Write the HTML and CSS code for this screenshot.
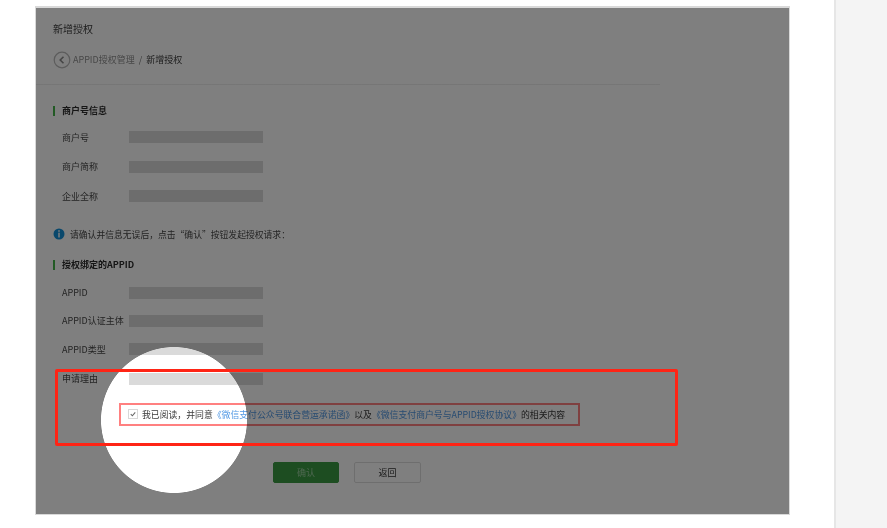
FILE: index.html
```html
<!DOCTYPE html>
<html lang="zh-CN">
<head>
<meta charset="utf-8">
<title>新增授权</title>
<link rel="stylesheet" href="styles.css">
</head>
<body>
<div class="page">
  <main class="main">
    <section class="shot">
      <div class="content">
        <h1 class="title">新增授权</h1>
        <div class="crumbs">
          <svg class="back" width="18" height="18" viewBox="0 0 18 18"><circle cx="9" cy="9" r="7.8" fill="none" stroke="#b8b8b8" stroke-width="1.2"/><path d="M10.5 5.8 7.2 9l3.3 3.2" fill="none" stroke="#8a8a8a" stroke-width="1.6"/></svg>
          <span class="crumb-link">APPID授权管理</span>
          <span class="crumb-sep">/</span>
          <span class="crumb-current">新增授权</span>
        </div>
        <hr class="divider">
        <h2 class="section first">商户号信息</h2>
        <div class="rows rows-a">
          <div class="row"><span class="label">商户号</span><span class="bar"></span></div>
          <div class="row"><span class="label">商户简称</span><span class="bar"></span></div>
          <div class="row"><span class="label">企业全称</span><span class="bar"></span></div>
        </div>
        <div class="notice">
          <svg width="12" height="12" viewBox="0 0 12 12"><circle cx="6" cy="6" r="5.5" fill="#1290d8"/><rect x="5.2" y="2.2" width="1.6" height="1.6" fill="#eaf6fc"/><rect x="5.2" y="4.7" width="1.6" height="4.8" fill="#eaf6fc"/></svg>
          <span>请确认并信息无误后，点击“确认”按钮发起授权请求：</span>
        </div>
        <h2 class="section second">授权绑定的APPID</h2>
        <div class="rows rows-b">
          <div class="row"><span class="label">APPID</span><span class="bar"></span></div>
          <div class="row"><span class="label">APPID认证主体</span><span class="bar"></span></div>
          <div class="row"><span class="label">APPID类型</span><span class="bar"></span></div>
          <div class="row reason"><span class="label">申请理由</span><span class="bar"></span></div>
        </div>
        <div class="agree">
          <span class="check"><svg width="10" height="10" viewBox="0 0 10 10"><path d="M2.2 5.2 4.2 7.2 7.8 3" fill="none" stroke="#666" stroke-width="1.3"/></svg></span>
          <span>我已阅读，并同意<a class="link">《微信支付公众号联合营运承诺函》</a>以及<a class="link">《微信支付商户号与APPID授权协议》</a>的相关内容</span>
        </div>
        <div class="actions">
          <button class="btn primary" type="button">确认</button>
          <button class="btn" type="button">返回</button>
        </div>
      </div>
      <div class="agree-frame"></div>
      <div class="dim"></div>
      <div class="highlight"></div>
    </section>
  </main>
  <aside class="side"></aside>
</div>
</body>
</html>
```
FILE: styles.css
```css
* { box-sizing: border-box; }
html, body { margin: 0; height: 100%; }
body {
  overflow: hidden;
  background: #fff;
  font-family: "Noto Sans CJK SC", "Liberation Sans", sans-serif;
  font-size: 9px;
  color: #333;
}
.page { display: flex; height: 528px; }
.main { width: 834px; padding: 6px 0 0 35px; }
.side { flex: 1; background: #f4f4f4; border-left: 2px solid #e6e6e6; }

.shot {
  position: relative;
  width: 755px;
  height: 509px;
  background: #fff;
  border: solid #d9d9d9;
  border-width: 2px 1px 1px 1px;
}
.content { height: 100%; padding-top: 14px; filter: blur(0.35px); }

.title { margin: 0 0 0 17px; font-size: 10px; line-height: 14px; font-weight: 400; color: #3c3c3c; }
.crumbs { display: flex; align-items: center; margin: 15px 0 0 17px; height: 18px; line-height: 18px; }
.back { margin-right: 2px; }
.crumb-link { color: #8f8f8f; }
.crumb-sep { margin: 0 4px; color: #777; }
.crumb-current { color: #3c3c3c; }
.divider { width: 624px; margin: 15px 0 0; border: 0; border-top: 1px solid #9e9e9e30; }

.section {
  margin: 0 0 0 17px;
  padding-left: 7px;
  border-left: 2px solid #44b549;
  font-size: 9px;
  line-height: 10px;
  font-weight: 700;
  color: #2c2c2c;
}
.section.first { margin-top: 21px; }
.section.second { margin-top: 20px; }

.rows { display: flex; flex-direction: column; margin-left: 26px; }
.rows-a { gap: 17.5px; margin-top: 15px; }
.rows-b { gap: 16.4px; margin-top: 16.6px; }
.row { display: flex; align-items: center; height: 12px; }
.label { width: 67px; flex: none; white-space: nowrap; color: #484848; }
.bar { width: 134px; height: 12px; background: #dadada; }
.row.reason { margin-top: 1.2px; }

.notice { display: flex; align-items: center; gap: 5px; margin: 26px 0 0 17px; height: 12px; font-size: 8.8px; color: #484848; }

.agree {
  display: flex;
  align-items: center;
  gap: 4px;
  width: 461px;
  height: 22px;
  margin: 18px 0 0 83px;
  padding: 1px 0 0 9px;
  font-size: 8.85px;
  color: #3a3a3a;
}
.check {
  display: flex;
  width: 10px;
  height: 10px;
  border: 1px solid #d8d8d8;
  align-items: center;
  justify-content: center;
  background: #fff;
}
.link { color: #4f97e3; }

.actions { display: flex; gap: 15px; margin: 37px 0 0 237px; }
.btn {
  width: 67px;
  height: 21px;
  padding: 0;
  border: 1px solid #dcdcdc;
  border-radius: 2px;
  background: #fff;
  font: inherit;
  color: #333;
}
.btn.primary { width: 66px; border-color: #3a9a42; background: #3a9a42; color: #9ccfa0; }

.dim {
  position: absolute;
  inset: 0;
  background: radial-gradient(circle 74px at 138px 412px, transparent 72.6px, rgba(0, 0, 0, 0.5) 73.3px);
}
.agree-frame {
  position: absolute;
  left: 83px;
  top: 395px;
  width: 461px;
  height: 23px;
  border: 2px solid #ff8080;
}
.highlight {
  position: absolute;
  left: 19px;
  top: 361px;
  width: 623px;
  height: 77px;
  border: 3px solid #ff2415;
  border-radius: 2px;
}
```
